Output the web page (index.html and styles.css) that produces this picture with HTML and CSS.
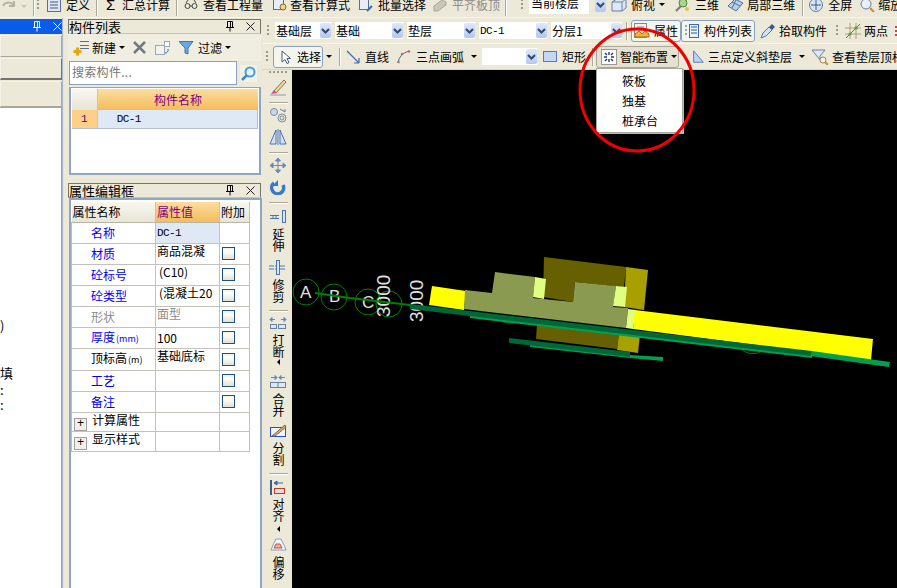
FILE: index.html
```html
<!DOCTYPE html>
<html lang="zh">
<head>
<meta charset="utf-8">
<title>GCL</title>
<link rel="stylesheet" href="styles.css">
</head>
<body>
<svg class="defs" width="0" height="0" aria-hidden="true">
  <symbol id="chev" viewBox="0 0 11 15"><path d="M2 6l3.500 3.500L9 6" fill="none" stroke="#34476e" stroke-width="2"/></symbol>
  <symbol id="pin" viewBox="0 0 10 11"><path d="M2.500 0.500h5v6h-5zM5.500 0.500v6M1 6.500h8M5 6.500v4" fill="none" stroke="#000" stroke-width="1"/></symbol>
  <symbol id="close" viewBox="0 0 9 9"><path d="M0.500 0.500l8 8M8.500 0.500l-8 8" fill="none" stroke="#222" stroke-width="1"/></symbol>
</svg>
<div class="app">
  <header class="topbar">
    <div class="topbar-in">
      <svg class="ti w28" viewBox="0 0 28 14"><path d="M3 8a6 6 0 0 1 11 0M14 3v5h-5" fill="none" stroke="#b5b3a6" stroke-width="2"/><path d="M21 7h6l-3 3z" fill="#c8c6b8"/></svg>
      <i class="tsep m5"></i><i class="tgrip m3"></i>
      <svg class="ti w14 m8" viewBox="0 0 14 14"><rect x="0.500" y="0.500" width="13" height="13" fill="#dfe8f6" stroke="#5a6f96"/><path d="M3 4h8M3 7h8M3 10h8" stroke="#44587e"/></svg>
      <span class="m5">定义</span><i class="tsep m6"></i>
      <span class="sigma m9">Σ</span><span class="m5">汇总计算</span><i class="tsep m6"></i>
      <svg class="ti w14 m7" viewBox="0 0 14 14"><circle cx="3.500" cy="8" r="2.500" fill="none" stroke="#444"/><circle cx="10.500" cy="8" r="2.500" fill="none" stroke="#444"/><path d="M6 8h2M2 5l2-3M12 5l-2-3" stroke="#444" fill="none"/></svg>
      <span class="m5">查看工程量</span>
      <svg class="ti w15 m10" viewBox="0 0 15 14"><rect x="0.500" y="0.500" width="10" height="11" fill="#e8eef8" stroke="#5a6f96"/><circle cx="10" cy="9" r="3" fill="#f4d488" stroke="#8a6a20"/></svg>
      <span class="m2">查看计算式</span>
      <svg class="ti w14 m9" viewBox="0 0 14 14"><rect x="0.500" y="0.500" width="9" height="11" fill="#e8eef8" stroke="#5a6f96"/><path d="M8 13l5-5" stroke="#3a6ab0" stroke-width="2"/></svg>
      <span class="m5">批量选择</span>
      <svg class="ti w14 m7" viewBox="0 0 14 14"><path d="M1 8l8-6 4 2v3l-8 6H1z" fill="#c9c7ba" stroke="#a8a698"/></svg>
      <span class="m5 grey">平齐板顶</span><i class="tsep m5"></i><i class="tgrip m15"></i>
      <span class="twhite m6">当前楼层</span>
      <span class="arrowbtn m6"><svg width="11" height="15"><use href="#chev"/></svg></span>
      <svg class="ti w16 m5" viewBox="0 0 16 14"><path d="M1 4l5-3h9v9l-4 3H1z" fill="#dfe8f6" stroke="#6a7fa6"/><path d="M1 4h10v9M11 4l4-3" fill="none" stroke="#6a7fa6"/></svg>
      <span class="m4">俯视</span><i class="caret m4"></i>
      <svg class="ti w14 m10" viewBox="0 0 14 14"><circle cx="8" cy="5" r="4" fill="#a9d48a" stroke="#4a8a3a"/><path d="M6 8l-5 5" stroke="#777" stroke-width="2"/><circle cx="12" cy="11" r="2" fill="#e8c050"/></svg>
      <span class="m6">三维</span>
      <svg class="ti w17 m8" viewBox="0 0 17 14"><path d="M1 8l7-7 8 4-7 8z" fill="#b7cdec" stroke="#5a6f96"/><path d="M5 4l8 4M9 2l-4 8" stroke="#5a6f96"/></svg>
      <span class="m3">局部三维</span><i class="tsep m7"></i>
      <svg class="ti w17 m5" viewBox="0 0 17 14"><circle cx="8" cy="7" r="6.500" fill="#d8e4f4" stroke="#6a7fa6"/><path d="M8 2v10M3 7h10" stroke="#3a5a90"/></svg>
      <span class="m3">全屏</span>
      <svg class="ti w15 m8" viewBox="0 0 15 14"><circle cx="6" cy="6" r="5" fill="#e8f0fa" stroke="#6a7fa6"/><path d="M10 10l4 4" stroke="#c09030" stroke-width="2"/></svg>
      <span class="m3">缩放</span>
    </div>
  </header>

  <div class="main">
    <aside class="left">
      <div class="left-title">
        <svg class="pin-w" width="10" height="11" viewBox="0 0 10 11"><path d="M2.500 0.500h5v6h-5zM5.500 0.500v6M1 6.500h8M5 6.500v4" fill="none" stroke="#fff"/></svg>
        <svg class="close-w" width="9" height="9" viewBox="0 0 9 9"><path d="M0.500 0.500l8 8M8.500 0.500l-8 8" fill="none" stroke="#fff"/></svg>
      </div>
      <div class="left-btn"></div>
      <div class="left-btn left-btn-act"></div>
      <div class="left-btn left-btn-last"></div>
      <div class="left-list">
        <div class="ll-a">)</div>
        <div class="ll-b">填</div>
        <div class="ll-c">:</div>
        <div class="ll-d">:</div>
      </div>
    </aside>
    <div class="split"></div>

    <section class="mid">
      <div class="ptitle"><span class="ptitle-t">构件列表</span><svg class="ptitle-pin" width="10" height="11"><use href="#pin"/></svg><svg class="ptitle-x" width="9" height="9"><use href="#close"/></svg></div>
      <div class="mtools">
        <svg class="mi16" viewBox="0 0 16 16"><path d="M0.500 11.500h8M4.500 7.500v8" stroke="#e0a818" stroke-width="3"/><path d="M7 1.500h9M7 5.500h9M7 8.500h9" stroke="#5a6f96"/></svg>
        <span class="m3">新建</span><i class="caret m3"></i>
        <svg class="mx" viewBox="0 0 13 13"><path d="M1 1l11 11M12 1L1 12" stroke="#707a82" stroke-width="2.500"/></svg>
        <svg class="mi16 m9" viewBox="0 0 16 16"><rect x="0.500" y="5.500" width="9" height="9" fill="#f4f4ee" stroke="#98a8b8"/><rect x="9.500" y="1.500" width="5" height="5" fill="#fff" stroke="#98a8b8"/><path d="M13 9a3 3 0 0 1-3 4" stroke="#3a6ab0" fill="none"/></svg>
        <svg class="mi15 m8" viewBox="0 0 15 14"><path d="M0 0.500h14L9 7v6L6 12V7z" fill="#6aa8dc" stroke="#3a78b0"/></svg>
        <span class="m4">过滤</span><i class="caret m3"></i>
      </div>
      <div class="msearch">
        <div class="sbox">搜索构件...</div>
        <svg class="sglass" viewBox="0 0 17 17"><rect width="17" height="17" fill="#f4f2e8"/><circle cx="10" cy="7" r="4.500" fill="#e6f4fc" stroke="#4a9ad8" stroke-width="2"/><path d="M6.500 10.500L2 15" stroke="#3a8ad0" stroke-width="2.500"/></svg>
      </div>
      <div class="mlist">
        <div class="lrow lhead"><div class="lcorner"></div><div class="lhcell">构件名称</div></div>
        <div class="lrow lbody"><div class="lnum">1</div><div class="lval mono">DC-1</div></div>
      </div>

      <div class="ptitle ptitle2"><span class="ptitle-t">属性编辑框</span><svg class="ptitle-pin" width="10" height="11"><use href="#pin"/></svg><svg class="ptitle-x" width="9" height="9"><use href="#close"/></svg></div>
      <div class="propbox">
        <table class="ptable">
          <colgroup><col class="c1"><col class="c2"><col class="c3"></colgroup>
          <tr class="trh"><th class="th1">属性名称</th><th class="th2">属性值</th><th class="th3">附加</th></tr>
          <tr><td class="nm blue">名称</td><td class="vl sel mono">DC-1</td><td></td></tr>
          <tr><td class="nm blue">材质</td><td class="vl up">商品混凝</td><td class="ck"><i class="chk"></i></td></tr>
          <tr><td class="nm blue">砼标号</td><td class="vl up pad2">(C10)</td><td class="ck"><i class="chk"></i></td></tr>
          <tr><td class="nm blue">砼类型</td><td class="vl up pad2">(混凝土20</td><td class="ck"><i class="chk"></i></td></tr>
          <tr><td class="nm grey">形状</td><td class="vl up grey">面型</td><td class="ck"><i class="chk"></i></td></tr>
          <tr><td class="nm blue">厚度<small>(mm)</small></td><td class="vl">100</td><td class="ck"><i class="chk"></i></td></tr>
          <tr class="tall"><td class="nm">顶标高<small>(m)</small></td><td class="vl up">基础底标</td><td class="ck"><i class="chk"></i></td></tr>
          <tr><td class="nm blue">工艺</td><td class="vl"></td><td class="ck"><i class="chk"></i></td></tr>
          <tr><td class="nm blue">备注</td><td class="vl"></td><td class="ck"><i class="chk"></i></td></tr>
          <tr class="trg"><td class="gp"><i class="plus">+</i>计算属性</td><td></td><td></td></tr>
          <tr class="trg"><td class="gp"><i class="plus">+</i>显示样式</td><td></td><td></td></tr>
        </table>
      </div>
    </section>

    <section class="right">
      <div class="row1">
        <i class="tgrip rgrip"></i>
        <div class="combo c56"><span>基础层</span><b class="arrowbtn"><svg width="11" height="15"><use href="#chev"/></svg></b></div>
        <div class="combo c68"><span>基础</span><b class="arrowbtn"><svg width="11" height="15"><use href="#chev"/></svg></b></div>
        <div class="combo c68"><span>垫层</span><b class="arrowbtn"><svg width="11" height="15"><use href="#chev"/></svg></b></div>
        <div class="combo c68"><span class="mono">DC-1</span><b class="arrowbtn"><svg width="11" height="15"><use href="#chev"/></svg></b></div>
        <div class="combo c71"><span>分层1</span><b class="arrowbtn"><svg width="11" height="15"><use href="#chev"/></svg></b></div>
        <i class="rsep"></i>
        <div class="chkbtn w50 m4">
          <svg class="mi16" viewBox="0 0 16 16"><rect x="0.500" y="0.500" width="12" height="14" fill="#f4f4ee" stroke="#888"/><path d="M3 4h7" stroke="#888"/><path d="M1 11l4-3 3 3 3-3 4 3v3H1z" fill="#f0b040" stroke="#b07010"/></svg>
          <span>属性</span>
        </div>
        <div class="chkbtn w74">
          <svg class="mi16" viewBox="0 0 16 16"><rect x="5.500" y="1.500" width="9" height="13" fill="#eaf2fb" stroke="#3a6ab0"/><path d="M7 4h6M7 7h6M7 10h6M1 3h2M1 7h2M1 11h2" stroke="#2a5aa0"/></svg>
          <span>构件列表</span>
        </div>
        <svg class="mi16 m5" viewBox="0 0 16 16"><path d="M1 15l2-5 6-6 3 3-6 6z" fill="#cfe4f6" stroke="#4a7ab0"/><path d="M9 4l3-3 3 3-3 3z" fill="#3a5a90"/></svg>
        <span class="m3">拾取构件</span>
        <i class="tgrip rgrip2"></i>
        <svg class="mi16 m7" viewBox="0 0 16 16"><path d="M0 11h16M0 5h16M5 0v16M11 0v16" stroke="#b0a070"/><path d="M1 15L15 1" stroke="#d04040"/><circle cx="5" cy="11" r="1.500" fill="#40a040"/><circle cx="11" cy="5" r="1.500" fill="#40a040"/></svg>
        <span class="m3">两点</span>
        <svg class="mi14 m7" viewBox="0 0 14 14"><path d="M1 2v10" stroke="#d04040" stroke-width="2" stroke-dasharray="2 2"/></svg>
      </div>
      <div class="row2">
        <i class="tgrip rgrip3"></i>
        <div class="chkbtn w50">
          <svg class="cursor" viewBox="0 0 10 14"><path d="M1 1v11l3-2.500 2 4 2-1-2-4h3.500z" fill="#fff" stroke="#44587e"/></svg>
          <span>选择</span>
        </div>
        <i class="caret m3"></i><i class="rsep m7"></i>
        <svg class="mi14 m6" viewBox="0 0 14 14"><path d="M1 1l12 12M13 13V8M13 13H8" fill="none" stroke="#3a6ab0" stroke-width="1.200"/></svg>
        <span class="m5">直线</span>
        <svg class="mi14 m8" viewBox="0 0 14 14"><path d="M1 13Q2 4 12 1" fill="none" stroke="#3a6ab0"/><circle cx="1.500" cy="12" r="1.200" fill="#d06050"/><circle cx="5" cy="4" r="1.200" fill="#d06050"/><circle cx="12" cy="1.500" r="1.200" fill="#d06050"/></svg>
        <span class="m5">三点画弧</span><i class="caret m7"></i>
        <div class="combo c55 m5"><span></span><b class="arrowbtn"><svg width="11" height="15"><use href="#chev"/></svg></b></div>
        <svg class="rect-i m2" viewBox="0 0 14 11"><rect x="0.500" y="0.500" width="13" height="10" fill="#c4d8f2" stroke="#5a7ab0"/></svg>
        <span class="m5">矩形</span>
        <i class="rsep m6"></i>
        <div class="smart m3">
          <svg class="mi16" viewBox="0 0 16 16"><rect x="0.500" y="0.500" width="15" height="15" fill="#fff" stroke="#444" stroke-dasharray="1 1"/><path d="M8 3v3M8 10v3M3 8h3M10 8h3M4 4l2 2M12 4l-2 2M4 12l2-2M12 12l-2-2" stroke="#20386a" stroke-width="1.400"/></svg>
          <span>智能布置</span><i class="caret"></i>
          <div class="menu">
            <div class="mitem">筱板</div>
            <div class="mitem">独基</div>
            <div class="mitem">桩承台</div>
          </div>
        </div>
        <svg class="mi14 m12" viewBox="0 0 14 16"><path d="M2 1v13h11z" fill="#bcd2f0" stroke="#4a74b4"/></svg>
        <span class="m3">三点定义斜垫层</span><i class="caret m7"></i>
        <svg class="mi16 m7" viewBox="0 0 16 16"><path d="M0 1h13L8 7v4z" fill="#dce8f6" stroke="#6a7fa6"/><circle cx="11" cy="11" r="3" fill="#f0f4fa" stroke="#a08a40"/><path d="M13 13l3 3" stroke="#c09030" stroke-width="2"/></svg>
        <span class="m4 nowrap">查看垫层顶标</span>
      </div>
      <div class="work">
        <nav class="vt">
          <i class="vgrip"></i>
          <svg class="vi h18 t5" viewBox="0 0 18 18"><path d="M1 17h16" stroke="#8a98b0"/><path d="M4 14L15 2l2 2L7 15z" fill="#f2d8a0" stroke="#8a7040"/><path d="M2 16l3-4 3 3z" fill="#d05090"/></svg>
          <i class="vsep t6"></i>
          <svg class="vi h16 t3" viewBox="0 0 18 16"><circle cx="5" cy="5" r="3.500" fill="#c8d8ec" stroke="#7a8aa0"/><circle cx="13" cy="11" r="4" fill="none" stroke="#7a8aa0"/><circle cx="13" cy="11" r="2" fill="none" stroke="#7a8aa0"/><path d="M11 2l5 3M16 5V2" stroke="#5a7ab0" fill="none"/></svg>
          <svg class="vi h16 t6" viewBox="0 0 18 16"><path d="M7 1L1 15h6zM11 1l6 14h-6zM9 0v16" fill="#d6e2f4" stroke="#4a74b4"/></svg>
          <i class="vsep t7"></i>
          <svg class="vi h15 t4" viewBox="0 0 18 15"><path d="M9 0l2.500 3h-5zM9 15l2.500-3h-5zM1 7.500l3-2.500v5zM17 7.500l-3-2.500v5zM9 3v9M4 7.500h10" fill="#6a88b0" stroke="#6a88b0"/></svg>
          <svg class="vi h15 t7" viewBox="0 0 18 15"><path d="M5 3a6 6 0 1 0 9 2" fill="none" stroke="#3a78c8" stroke-width="3.500"/><path d="M9 0v6H3z" fill="#3a78c8"/></svg>
          <i class="vsep t7"></i>
          <svg class="vi h13 t6" viewBox="0 0 18 13"><path d="M1 5.500h9M1 8.500h9M4 5.500v3M7 5.500v3" stroke="#4a74b4" fill="none"/><rect x="13.500" y="0.500" width="3" height="12" fill="#dce8f6" stroke="#4a74b4"/></svg>
          <span class="vl5">延伸</span>
          <svg class="vi h15 t7" viewBox="0 0 18 15"><path d="M0 6h7M0 9h7M11 6h6M11 9h6" stroke="#4a74b4" stroke-dasharray="5 1"/><rect x="7.500" y="0.500" width="3" height="14" fill="#dce8f6" stroke="#4a74b4"/></svg>
          <span class="vl4">修剪</span>
          <i class="vsep t6"></i>
          <svg class="vi h12 t5" viewBox="0 0 18 12"><path d="M1 2.500h5M17 2.500h-5M1 2.500l2-2v4zM17 2.500l-2-2v4z" fill="#5a8ac8" stroke="#5a8ac8"/><rect x="1.500" y="7.500" width="6" height="4" fill="#dce8f6" stroke="#6a7fa6"/><rect x="9.500" y="7.500" width="7" height="4" fill="#dce8f6" stroke="#6a7fa6"/></svg>
          <span class="vl5">打断</span><i class="vtri"></i>
          <svg class="vi h13 t10" viewBox="0 0 18 13"><path d="M8 2.500H2M10 2.500h6M8 2.500l-2-2v4zM10 2.500l2-2v4z" fill="#5a8ac8" stroke="#5a8ac8"/><rect x="1.500" y="7.500" width="15" height="5" fill="#dce8f6" stroke="#6a7fa6"/><path d="M9 7v5" stroke="#6a7fa6"/></svg>
          <span class="vl5">合并</span>
          <svg class="vi h13 t6" viewBox="0 0 18 13"><rect x="1.500" y="3.500" width="15" height="9" fill="#f2f6fc" stroke="#2a4ae0"/><path d="M3 12L16 1l1 2L6 12z" fill="#d8b880" stroke="#806030"/></svg>
          <span class="vl5">分割</span>
          <i class="vsep t6"></i>
          <svg class="vi h15 t5" viewBox="0 0 18 15"><path d="M2 0v15" stroke="#3a5a90" stroke-width="2"/><rect x="5.500" y="8.500" width="10" height="5" fill="#f2d8d0" stroke="#b04030"/><path d="M5 3h9M5 3l3-2v4z" stroke="#3a6ab0" fill="#3a6ab0"/></svg>
          <span class="vl3">对齐</span><i class="vtri t3"></i>
          <svg class="vi h13 t6" viewBox="0 0 18 13"><path d="M2 12l2-5 3-6h5l3 6 2 5z" fill="#f0f4fa" stroke="#8aa0c0"/><path d="M5 10l2-4h4l2 4z" fill="#f0b0a0" stroke="#c05040"/></svg>
          <span class="vl5">偏移</span>
        </nav>
        <div class="canvas">
          <svg class="draw" viewBox="292 70 605 518">
            <g fill="none" stroke="#008000">
              <circle cx="306" cy="292" r="13"/>
              <circle cx="334" cy="297" r="13"/>
              <circle cx="368" cy="302" r="13"/>
              <circle cx="389" cy="304" r="13"/>
              <path d="M500 320q9 6 20 1M742 350q10 7 20 1"/>
            </g>
            <g fill="#e0e0e0" font-family="'Liberation Sans',sans-serif">
              <text x="300" y="298" font-size="17">A</text>
              <text x="329" y="302" font-size="17">B</text>
              <text x="362" y="308" font-size="17">C</text>
              <text class="dim" transform="translate(390 317) rotate(-90)">3000</text>
              <text class="dim" transform="translate(423 322) rotate(-90)">3000</text>
            </g>
            <path d="M315 293L350 298L410 305" fill="none" stroke="#008000" stroke-width="2"/>
            <polygon fill="#ffff00" points="432,286 466,291 464,310 429,305"/>
            <polygon fill="#666000" points="544,257 626,267 624,287 575,282 573,302 543,297"/>
            <polygon fill="#a8a000" points="626,267 648,270 644,310 624,307"/>
            <polygon fill="#8a9a50" points="465,290 492,293 495,272 535,277 533,298 573,302 575,282 616,286 613,307 628,308 626,328 464,309"/>
            <polygon fill="#e0ff80" points="535,277 546,279 544,299 533,297"/>
            <polygon fill="#e0ff80" points="616,286 627,287 625,307 613,306"/>
            <polygon fill="#e0ff80" points="628,309 636,310 633,329 626,328"/>
            <polygon fill="#ffff00" points="635,310 873,339 871,360 633,329"/>
            <polygon fill="#666000" points="537,323 619,332 617,349 536,339"/>
            <polygon fill="#a8a000" points="619,333 640,335 638,353 617,350"/>
            <polygon fill="#00a050" points="470,315 812,354 812,358 470,318"/>
            <polygon fill="#006838" points="410,304 590,325 812,351 812,356 590,330 410,309"/>
            <polygon fill="#00a050" points="812,351 890,362 889,367 810,356"/>
            <polygon fill="#00a050" points="530,344 630,355 663,357 663,361 630,358 530,347"/>
            <polygon fill="#006838" points="509,338 630,352 630,357 509,343"/>
          </svg>
        </div>
      </div>
    </section>
  </div>
  <svg class="ring" viewBox="0 0 120 128"><ellipse cx="60" cy="64" rx="57" ry="61" fill="none" stroke="#f00000" stroke-width="3"/></svg>
</div>
</body>
</html>
```
FILE: styles.css
```css
* { box-sizing: border-box; }
html, body { margin: 0; padding: 0; }
body {
  width: 897px; height: 588px; overflow: hidden;
  background: #ece9d8; color: #000;
  font: 12px/14px "Noto Sans CJK SC", "Liberation Sans", sans-serif;
}
i { font-style: normal; display: block; flex: none; }
.defs { position: absolute; }
.app { position: relative; width: 897px; height: 588px; display: flex; flex-direction: column; }
.mono { font-family: "Liberation Mono", "Noto Sans CJK SC", monospace; font-size: 11px; letter-spacing: -.6px; }
.grey { color: #8c8c8c; }
.blue { color: #0000f0; }
.nowrap { white-space: nowrap; }

.m2 { margin-left: 2px; } .m3 { margin-left: 3px; } .m4 { margin-left: 4px; } .m5 { margin-left: 5px; }
.m6 { margin-left: 6px; } .m7 { margin-left: 7px; } .m8 { margin-left: 8px; } .m9 { margin-left: 9px; }
.m10 { margin-left: 10px; } .m12 { margin-left: 12px; } .m15 { margin-left: 15px; }

/* top toolbar */
.topbar { height: 18px; flex: none; overflow: hidden; border-bottom: 1px solid #f7f5ea; }
.topbar-in { display: flex; align-items: center; height: 17px; margin-top: -4px; white-space: nowrap; }
.topbar-in span { flex: none; }
.ti { flex: none; height: 14px; }
.w14 { width: 14px; } .w15 { width: 15px; } .w16 { width: 16px; } .w17 { width: 17px; } .w28 { width: 28px; }
.tsep { width: 1px; height: 22px; background: #aca899; box-shadow: 1px 0 #fff; }
.tgrip { width: 2px; height: 12px; background: repeating-linear-gradient(#9c9a8c 0 2px, transparent 2px 4px); }
.sigma { font-size: 15px; font-family: "Liberation Sans", sans-serif; width: 11px; }
.twhite { background: #fff; width: 60px; padding-left: 2px; height: 18px; }
.arrowbtn {
  display: block; flex: none; width: 11px; height: 15px;
  background: linear-gradient(#dfe8fa, #b3c8ee); border-radius: 2px;
}
.arrowbtn svg { display: block; }
.caret { width: 0; height: 0; border: 3px solid transparent; border-top: 3px solid #000; border-bottom: 0; }

/* main */
.main { flex: 1; display: flex; min-height: 0; }
.left { width: 62px; flex: none; display: flex; flex-direction: column; }
.left-title { height: 15px; margin-top: 1px; background: #0a5ce8; display: flex; align-items: center; width: 64px; }
.pin-w { margin-left: 32px; }
.close-w { margin-left: 11px; }
.left-btn { height: 22px; margin-top: 1px; background: #ece9d8; border: 1px solid #f5f3e8; border-right-color: #aca899; border-bottom-color: #aca899; }
.left-btn-act { border-bottom: 2px solid #76746a; border-right: 1px solid #76746a; }
.left-btn-last { height: 26px; }
.left-list { flex: 1; background: #fff; border-top: 1px solid #8fa7c4; border-right: 1px solid #8fa7c4; font-size: 13px; padding-top: 211px; }
.ll-a { height: 14px; }
.ll-b { height: 14px; margin-top: 33px; }
.ll-c { height: 14px; margin-top: 3px; }
.ll-d { height: 14px; margin-top: 1px; }
.split { width: 6px; flex: none; border-left: 1px solid #a8b6c8; background: #ece9d8; box-shadow: inset 1px 0 #e6e4d8; }

.mid { width: 194px; flex: none; display: flex; flex-direction: column; padding-top: 1px; }
.ptitle { height: 15px; flex: none; width: 193px; display: flex; align-items: center; border: 1px solid #77756a; border-bottom-color: #c5c2b0; }
.ptitle-t { font-size: 13px; white-space: nowrap; }
.ptitle-pin { margin-left: auto; }
.ptitle-x { margin-left: 11px; margin-right: 5px; }
.ptitle2 { margin-top: 8px; }
.mtools { height: 27px; flex: none; display: flex; align-items: center; padding-left: 5px; margin-right: 1px; background: #f0eee0; }
.mi16 { width: 16px; height: 16px; flex: none; }
.mi15 { width: 15px; height: 14px; flex: none; }
.mi14 { width: 14px; height: 14px; flex: none; }
.mx { width: 13px; height: 13px; margin-left: 8px; flex: none; }
.msearch { height: 24px; flex: none; display: flex; align-items: center; padding-left: 1px; }
.sbox { width: 168px; height: 24px; border: 1px solid #8aa0c2; background: #fff; color: #777; padding: 3px 2px; letter-spacing: .3px; }
.sglass { width: 17px; height: 17px; margin-left: 3px; }
.mlist { height: 88px; flex: none; margin: 2px 0 0 1px; width: 192px; border: 2px solid #8fa7c4; border-top-width: 1px; background: #fff; padding: 1px; }
.lrow { display: flex; }
.lhead { height: 21px; }
.lcorner { width: 26px; background: linear-gradient(#f8f7f0, #e8e5d6); border-right: 1px solid #c8c6b8; }
.lhcell { width: 161px; background: linear-gradient(#fbdd9e, #f5bc5c); color: #800080; text-align: center; font-size: 12px; line-height: 21px; }
.lbody { height: 19px; border-bottom: 1px solid #b5c0d0; }
.lnum { width: 26px; background: #fdd08a; color: #600060; text-align: center; font-size: 11px; line-height: 18px; border-right: 1px solid #c8c6b8; font-family: "Liberation Mono", monospace; }
.lval { width: 161px; background: #dfe8f5; padding-left: 19px; line-height: 18px; border-right: 1px solid #b5c0d0; }

.propbox { flex: 1; width: 193px; margin-left: 1px; border: 2px solid #8fa7c4; border-bottom: 0; background: #fff; padding: 2px 0 0 0; }
.ptable { border-collapse: collapse; table-layout: fixed; width: 178px; }
.c1 { width: 84px; } .c2 { width: 64px; } .c3 { width: 30px; }
.ptable td, .ptable th { border: 1px solid #c4c2b8; border-top: 0; padding: 0; height: 21px; font-weight: 400; font-size: 12px; overflow: hidden; white-space: nowrap; }
.ptable th { border: 0; border-right: 1px solid #c4c2b8; text-align: left; padding-left: 1px; height: 20px; background: linear-gradient(#f8f7f0, #e8e5d6); border-bottom: 1px solid #b8b6a8; }
.ptable .th2 { background: linear-gradient(#fbdd9e, #f5bc5c); color: #800080; }
.ptable .tall td { height: 22px; }
.ptable .nm { padding-left: 19px; }
.nm small { font-size: 9px; margin-left: 1px; }
.ptable .vl { padding-left: 1px; }
.up { vertical-align: top; }
.ptable .pad2 { padding-left: 3px; }
.sel { background: #dfe8f5; }
.ptable .mono { font-size: 11px; }
.ptable .ck { padding-left: 2px; }
.chk { width: 13px; height: 13px; border: 1px solid #1c5180; background: linear-gradient(#f0f0ea, #fff 30%, #e2e0d2); }
.ptable .trg td { height: 19.5px; }
.ptable .gp { padding-left: 2px; }
.plus { display: inline-block; width: 13px; height: 13px; margin-right: 5px; border: 1px solid #a0a0a0; background: #f2f0e6; font-family: "Liberation Mono", monospace; text-align: center; line-height: 11px; font-size: 12px; vertical-align: -2px; }

/* right */
.right { flex: 1; min-width: 0; display: flex; flex-direction: column; }
.row1 { height: 26px; flex: none; display: flex; align-items: center; white-space: nowrap; overflow: hidden; border-bottom: 1px solid #f7f5ea; }
.row2 { height: 26px; flex: none; display: flex; align-items: center; white-space: nowrap; border-bottom: 1px solid #d8d5c2; position: relative; z-index: 2; }
.rgrip { margin: 0 6px 0 5px; }
.combo { height: 17px; background: #fff; display: flex; align-items: center; justify-content: space-between; padding: 0 0 0 1px; margin-right: 4px; flex: none; }
.c56 { width: 56px; } .c68 { width: 68px; } .c71 { width: 71px; } .c55 { width: 55px; }
.rsep { width: 1px; height: 18px; background: #aca899; box-shadow: 1px 0 #fff; }
.chkbtn { height: 22px; display: flex; align-items: center; gap: 4px; padding-left: 2px; border: 1px solid #8aa0c2; border-radius: 3px; background: #f6f5ec; flex: none; }
.w50 { width: 50px; } .w74 { width: 74px; }
.rgrip2 { margin-left: 9px; }
.rgrip3 { margin-left: 4px; margin-right: 5px; }
.cursor { width: 10px; height: 14px; margin: 0 2px 0 5px; }
.rect-i { width: 14px; height: 11px; flex: none; }
.smart { position: relative; width: 83px; height: 22px; display: flex; align-items: center; gap: 3px; padding-left: 4px; border: 1px solid #aca899; border-radius: 3px; background: #e4e1d0; flex: none; }
.menu { position: absolute; left: -1px; top: 21px; width: 87px; height: 65px; background: #fff; border: 1px solid #aca899; box-shadow: 1px 1px 0 #bdbab0; padding-top: 2px; z-index: 3; }
.mitem { height: 20px; line-height: 20px; padding-left: 25px; }

.work { flex: 1; display: flex; min-height: 0; }
.vt { width: 30px; flex: none; display: flex; flex-direction: column; align-items: center; padding-top: 1px; padding-left: 2px; overflow: hidden; }
.vgrip { width: 18px; height: 2px; background: repeating-linear-gradient(90deg, #9c9a8c 0 2px, transparent 2px 4px); }
.vsep { width: 19px; height: 1px; background: #aca899; box-shadow: 0 1px #fff; margin-bottom: 1px; }
.vi { width: 18px; flex: none; display: block; }
.h18 { height: 18px; } .h16 { height: 16px; } .h15 { height: 15px; } .h13 { height: 13px; } .h12 { height: 12px; }
.t3 { margin-top: 3px; } .t4 { margin-top: 4px; } .t5 { margin-top: 5px; } .t6 { margin-top: 6px; }
.t7 { margin-top: 7px; } .t10 { margin-top: 10px; }
.vl3, .vl4, .vl5 { writing-mode: vertical-rl; text-orientation: upright; font-size: 12px; line-height: 14px; letter-spacing: .5px; height: 25px; flex: none; }
.vl3 { margin-top: 3px; } .vl4 { margin-top: 4px; } .vl5 { margin-top: 5px; }
.vtri { width: 0; height: 0; border: 3px solid transparent; border-right: 3px solid #000; border-left: 0; }
.canvas { flex: 1; background: #000; min-width: 0; }
.draw { display: block; width: 605px; height: 518px; }
.dim { font-size: 19px; }
.ring { position: absolute; left: 577px; top: 26px; width: 120px; height: 128px; pointer-events: none; z-index: 5; }
```
